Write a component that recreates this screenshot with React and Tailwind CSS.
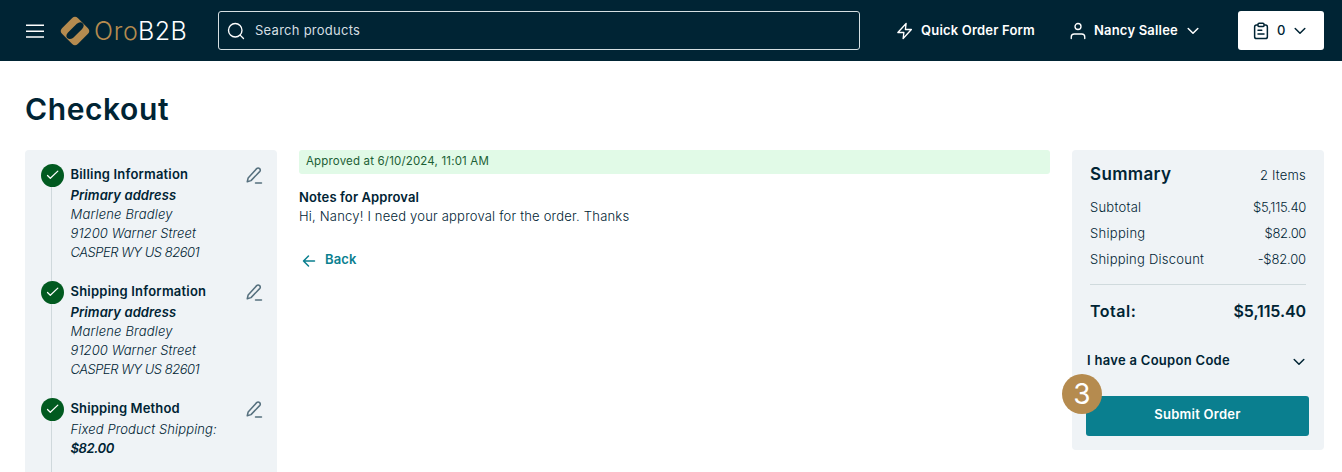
import React from "react";

function Svg({ className, children, width = 1.5 }) {
  return (
    <svg viewBox="0 0 24 24" fill="none" stroke="currentColor" strokeWidth={width} strokeLinecap="round" strokeLinejoin="round" className={`shrink-0 ${className}`}>
      {children}
    </svg>
  );
}

const Chevron = ({ className }) => (
  <svg viewBox="0 0 12 8" fill="none" stroke="currentColor" strokeWidth="1.5" strokeLinecap="round" strokeLinejoin="round" className={`h-2 w-3 shrink-0 ${className}`}>
    <path d="M1.2 1.5 6 6.3l4.8-4.8" />
  </svg>
);

function Logo() {
  return (
    <div className="ml-4 flex items-center">
      <svg viewBox="0 0 30 30" className="size-[30px]">
        <path fill="#b58b4f" fillRule="evenodd" d="M12.2 2Q15 -.6 17.800 2L28 12.200Q30.600 15 28 17.800L17.800 28Q15 30.600 12.200 28L2 17.800Q-.6 15 2 12.200ZM16.800 7.800 8 16.600Q5.200 20 7.200 22 9.600 24.200 13 22L21.900 13.200Q25 9.800 22.800 7.400 20.200 5 16.800 7.800Z" />
      </svg>
      <div className="ml-1 flex h-[30px] items-center text-[25px] leading-[30px] font-light">
        <span className="w-[44px] tracking-[0.7px] text-[#b58b4f]">Oro</span>
        <span className="tracking-[0.4px] text-white">B2B</span>
      </div>
    </div>
  );
}

function Header() {
  return (
    <header className="flex h-[61px] items-center bg-[#002434] pr-[18px] pl-[26px] text-[13px] text-white">
      <svg viewBox="0 0 18 14" fill="currentColor" className="h-[14px] w-[18px]">
        <path d="M0 .5h18v1.600H0zM0 6.500h18v1.600H0zM0 12.200h18v1.600H0z" />
      </svg>
      <Logo />
      <div className="ml-[31px] flex h-[39px] w-[642px] items-center rounded-[3px] border border-[#d5dfe2] pl-[8px]">
        <Svg className="size-[18px]" width={1.8}>
          <circle cx="11" cy="11" r="9" />
          <path d="m17.500 17.500 4.500 4.500" />
        </Svg>
        <span className="ml-[10px] tracking-[0.26px] text-[#d5dfe2]">Search products</span>
      </div>
      <div className="ml-[36px] flex w-[173px] items-center">
        <Svg className="size-[18px]" width={1.800}>
          <path d="M13.500 2 2.500 14h8l-1 8 11-12h-8z" />
        </Svg>
        <span className="ml-[7px] font-semibold whitespace-nowrap tracking-[0.19px]">Quick Order Form</span>
      </div>
      <div className="flex w-[160px] items-center">
        <Svg className="mt-px size-[18px]" width={1.800}>
          <circle cx="12" cy="6" r="4" />
          <path d="M3 22v-2q0-4 4-4h10q4 0 4 4v2" />
        </Svg>
        <span className="ml-[7px] font-semibold whitespace-nowrap tracking-[0.19px]">Nancy Sallee</span>
        <Chevron className="ml-[9px]" />
      </div>
      <div className="ml-auto flex h-[39px] w-[86px] items-center rounded-[3px] bg-white pl-[14px] text-[#002434]">
        <Svg className="size-[18px]" width={2}>
          <path d="M8 4H6Q3.500 4 3.500 6.500v13Q3.500 22 6 22h12q2.500 0 2.500-2.500v-13Q20.500 4 18 4h-2M8 3q0-1.500 1.500-1.500h5Q16 1.500 16 3v1.500Q16 6 14.500 6h-5Q8 6 8 4.500ZM8 11h5M8 16h8" />
        </Svg>
        <span className="ml-[7px] font-medium">0</span>
        <Chevron className="ml-[9px]" />
      </div>
    </header>
  );
}

function Step({ title, titleClass, children, height }) {
  return (
    <div className={`relative flex ${height}`}>
      <div className="absolute top-[23px] bottom-0 left-[26px] w-px bg-[#cfd8dc]" />
      <div className="ml-4 flex size-[23px] shrink-0 items-center justify-center rounded-full bg-[#015a20] text-white">
        <Svg className="size-[15px]" width={2}>
          <path d="m4 12 4.500 4.500L20.500 5" />
        </Svg>
      </div>
      <div className="ml-[6.500px] grow text-[13px] leading-[19px] whitespace-nowrap italic">
        <div className={`mt-px mb-[2px] font-semibold not-italic ${titleClass}`}>{title}</div>
        {children}
      </div>
      <Svg className="mt-[2px] mr-[14px] size-[18px] text-[#56707e]" width={2}>
        <path d="M3 21l1.200-5L15.500 3.500q2-2 4 0 1.800 2 0 4L8 19.500ZM14 22.500h8" />
      </Svg>
    </div>
  );
}

function Address() {
  return (
    <div className="font-light">
      <div className="font-semibold tracking-[0.09px]">Primary address</div>
      <div className="tracking-[0.19px]">Marlene Bradley</div>
      <div className="tracking-[0.09px]">91200 Warner Street</div>
      <div className="tracking-[-0.47px]">CASPER WY US 82601</div>
    </div>
  );
}

function Row({ label, value, labelClass, valueClass }) {
  return (
    <div className="flex h-[26px] items-center justify-between font-light">
      <span className={labelClass}>{label}</span>
      <span className={valueClass}>{value}</span>
    </div>
  );
}

export default function App() {
  return (
    <div className="h-[472px] overflow-hidden bg-white font-['Inter',sans-serif] text-[13px] text-[#002434]">
      <Header />
      <h1 className="ml-[25px] flex h-[89px] items-center pt-[8px] text-[30px] font-semibold tracking-[0.600px]">Checkout</h1>
      <main className="flex items-start">
        <aside className="ml-[25px] h-[340px] w-[252px] shrink-0 rounded-[4px] bg-[#eff3f6] pt-[14px]">
          <Step title="Billing Information" titleClass="tracking-[0.19px]" height="h-[117px]"><Address /></Step>
          <Step title="Shipping Information" titleClass="tracking-[0.22px]" height="h-[117px]"><Address /></Step>
          <Step title="Shipping Method" titleClass="tracking-[0.14px]" height="h-[117px]">
            <div className="font-light tracking-[0.12px]">Fixed Product Shipping:</div>
            <div className="font-semibold tracking-[-0.4px]">$82.00</div>
          </Step>
        </aside>
        <section className="ml-[22px] w-[751px] shrink-0">
          <div className="flex h-6 items-center rounded-[3px] bg-[#e1fae7] pb-px pl-[7px] text-[11.5px] tracking-[0.17px] text-[#1c6035]">Approved at 6/10/2024, 11:01 AM</div>
          <div className="mt-[14px] leading-[19px] font-semibold tracking-[0.11px]">Notes for Approval</div>
          <div className="leading-[19px] font-light tracking-[0.2px]">Hi, Nancy! I need your approval for the order. Thanks</div>
          <div className="mt-[24px] flex h-5 items-center pl-[3px] font-semibold text-[#0a7f8f]">
            <svg viewBox="0 0 14 14" fill="none" stroke="currentColor" strokeWidth="1.500" strokeLinecap="round" strokeLinejoin="round" className="mt-[2px] size-[14px]">
              <path d="M12.500 7H1.500M6.500 2l-5 5 5 5" />
            </svg>
            <span className="ml-[9px] tracking-[0.1px]">Back</span>
          </div>
        </section>
        <section className="ml-[22px] h-[300px] w-[252px] shrink-0 rounded-[4px] bg-[#eff3f6] px-[18px] pt-[11px]">
          <div className="mb-[6px] flex h-[28px] items-center justify-between">
            <h2 className="text-[17px] font-semibold tracking-[0.35px]">Summary</h2>
            <span className="pt-px font-light tracking-[0.2px]">2 Items</span>
          </div>
          <Row label="Subtotal" value="$5,115.40" labelClass="tracking-[0.25px]" valueClass="tracking-[-0.3px]" />
          <Row label="Shipping" value="$82.00" labelClass="tracking-[0.3px]" valueClass="tracking-[-0.35px]" />
          <Row label="Shipping Discount" value="-$82.00" labelClass="tracking-[0.25px]" valueClass="tracking-[-0.15px]" />
          <div className="mt-[11px] h-px bg-[#d0dadd]" />
          <div className="mt-[12px] flex h-[28px] items-center justify-between text-[16px]">
            <span className="font-semibold tracking-[0.5px]">Total:</span>
            <span className="font-semibold tracking-[-0.09px]">$5,115.40</span>
          </div>
          <div className="-ml-[3px] mt-[26px] flex h-[20px] items-center justify-between pr-px">
            <span className="font-semibold tracking-[0.29px]">I have a Coupon Code</span>
            <Chevron className="mt-[2px]" />
          </div>
          <div className="relative -mx-1 mt-[25px]">
            <button className="block h-10 w-[223px] rounded-[3px] bg-[#0a7f8f] pb-[3px] text-[13px] font-semibold tracking-[0.26px] text-white">Submit Order</button>
            <div className="absolute -top-[22px] -left-[24px] flex size-10 items-center justify-center rounded-full bg-[#b58b4f] text-[28px] text-white">3</div>
          </div>
        </section>
      </main>
    </div>
  );
}
